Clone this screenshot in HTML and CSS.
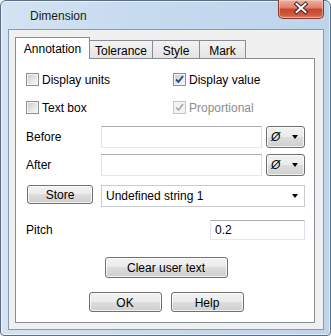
FILE: index.html
```html
<!DOCTYPE html>
<html lang="en">
  <head>
    <meta charset="UTF-8" />
    <title>Dimension</title>
    <link rel="stylesheet" href="styles.css">
  </head>
  <body>
    <div class="window">
      <div class="titlebar">
        <span class="title">Dimension</span>
        <div class="close">
          <svg width="46" height="19" viewBox="0 0 46 19">
            <path d="M18.5 5 L27.5 13 M27.5 5 L18.5 13" stroke="#3a2420" stroke-width="4" stroke-linecap="square" />
            <path d="M18.5 5 L27.5 13 M27.5 5 L18.5 13" stroke="#fff" stroke-width="2" stroke-linecap="square" />
          </svg>
        </div>
      </div>

      <div class="client">
        <div class="tabs">
          <div class="tab active">Annotation</div>
          <div class="tab tab-tol">Tolerance</div>
          <div class="tab tab-style">Style</div>
          <div class="tab tab-mark">Mark</div>
        </div>

        <div class="panel">
          <div class="checks">
            <label class="check"><span class="box"></span>Display units</label>
            <label class="check">
              <span class="box">
                <svg width="9" height="9" viewBox="0 0 9 9"><path d="M1 4.5 L3.5 7 L8 1" fill="none" stroke="#22448c" stroke-width="1.8" /></svg>
              </span>Display value
            </label>
            <label class="check"><span class="box"></span>Text box</label>
            <label class="check disabled">
              <span class="box">
                <svg width="9" height="9" viewBox="0 0 9 9"><path d="M1 4.5 L3.5 7 L8 1" fill="none" stroke="#a8a8a8" stroke-width="1.6" /></svg>
              </span>Proportional
            </label>
          </div>

          <div class="field row-before">
            <span class="label">Before</span>
            <div class="input"></div>
            <div class="btn pick"><span class="sym">Ø</span><span class="arrow"></span></div>
          </div>

          <div class="field row-after">
            <span class="label">After</span>
            <div class="input"></div>
            <div class="btn pick"><span class="sym">Ø</span><span class="arrow"></span></div>
          </div>

          <div class="field row-store">
            <div class="btn store">Store</div>
            <div class="input combo">Undefined string 1<span class="arrow"></span></div>
          </div>

          <div class="field row-pitch">
            <span class="label">Pitch</span>
            <div class="input pitch">0.2</div>
          </div>

          <div class="row-clear">
            <div class="btn clear">Clear user text</div>
          </div>

          <div class="row-actions">
            <div class="btn action">OK</div>
            <div class="btn action">Help</div>
          </div>
        </div>
      </div>
    </div>
  </body>
</html>
```

FILE: styles.css
```css
* {
  box-sizing: border-box;
}
body {
  margin: 0;
  font-family: "Liberation Sans", Arial, sans-serif;
  font-size: 12px;
  color: #000;
  background: #fff;
}
.window {
  width: 331px;
  height: 336px;
  border: 1px solid #5e6d80;
  border-radius: 6px 6px 4px 4px;
  background: linear-gradient(90deg, #d4e3f3 0%, #c7dbef 40%, #bdd4ec 100%);
  box-shadow: inset 0 0 0 1px rgba(255, 255, 255, 0.55);
}
.titlebar {
  height: 28px;
  display: flex;
  align-items: flex-start;
  justify-content: space-between;
}
.title {
  padding: 8px 0 0 29px;
  color: #1a1a1a;
}
.close {
  width: 46px;
  height: 19px;
  margin-right: 6px;
  margin-top: -1px;
  border: 1px solid #86382c;
  border-top: none;
  border-radius: 0 0 5px 5px;
  background: linear-gradient(#eab0a4 0%, #dc8068 45%, #c8442c 50%, #d05a42 85%, #e08a72 100%);
  box-shadow: inset 0 0 0 1px rgba(255, 220, 210, 0.5);
}
.close svg {
  display: block;
  margin: -1px 0 0 -1px;
}
.client {
  margin: 0 6px 0 7px;
  height: 301px;
  border: 1px solid #8d99a6;
  background: #f0f0f0;
  padding: 7px 8px 0 6px;
}
.tabs {
  display: flex;
  align-items: flex-end;
  height: 21px;
}
.tab {
  height: 18px;
  margin-left: -1px;
  border: 1px solid #898c95;
  border-bottom: none;
  background: linear-gradient(#f3f3f3, #e4e4e4);
  text-align: center;
  padding-top: 3px;
}
.tab.active {
  position: relative;
  z-index: 1;
  margin-left: 0;
  width: 75px;
  height: 22px;
  margin-bottom: -1px;
  background: #fff;
  padding-top: 4px;
}
.tab-tol {
  width: 64px;
}
.tab-style {
  width: 48px;
}
.tab-mark {
  width: 47px;
}
.panel {
  height: 265px;
  border: 1px solid #898c95;
  background: #fff;
  padding: 13px 8px 10px 10px;
  display: flex;
  flex-direction: column;
}
.checks {
  display: grid;
  grid-template-columns: 147px auto;
  row-gap: 13px;
}
.check {
  height: 15px;
  display: flex;
  align-items: center;
  gap: 3px;
}
.check.disabled {
  color: #8d8d8d;
}
.box {
  width: 13px;
  height: 13px;
  border: 1px solid #8e8f8f;
  padding: 1px;
  background: linear-gradient(135deg, #cfcfcf, #f7f7f7) content-box, #f4f4f4;
  display: flex;
  align-items: center;
  justify-content: center;
}
.check.disabled .box {
  border-color: #c5c5c5;
  background: #f4f4f4;
}
.field {
  display: grid;
  grid-template-columns: 75px 161px 43px;
  align-items: center;
  height: 22px;
}
.row-before {
  margin-top: 11px;
}
.row-after {
  margin-top: 6px;
}
.row-store {
  margin-top: 9px;
}
.row-pitch {
  margin-top: 13px;
  height: 20px;
}
.input {
  height: 22px;
  border: 1px solid;
  border-color: #abadb3 #dbdfe6 #e3e9ef #e2e3ea;
  background: #fff;
  padding: 3px 4px;
}
.btn {
  border: 1px solid #707070;
  border-radius: 3px;
  background: linear-gradient(#f2f2f2 0%, #ebebeb 50%, #dddddd 50%, #cfcfcf 100%);
  box-shadow: inset 0 0 0 1px rgba(255, 255, 255, 0.7);
  text-align: center;
}
.pick {
  margin-left: 4px;
  height: 22px;
  display: flex;
  align-items: center;
  justify-content: space-between;
  padding: 0 6px 0 4px;
}
.sym {
  font-style: italic;
}
.arrow {
  width: 0;
  height: 0;
  border-left: 3.5px solid transparent;
  border-right: 3.5px solid transparent;
  border-top: 4px solid #000;
}
.store {
  width: 66px;
  height: 19px;
  margin-left: 1px;
  align-self: start;
  padding-top: 2px;
}
.combo {
  grid-column: 2 / 4;
  border-color: #c8ccd2;
  display: flex;
  align-items: center;
  justify-content: space-between;
  padding: 0 6px 0 4px;
}
.pitch {
  grid-column: 2 / 4;
  justify-self: end;
  width: 95px;
  height: 20px;
  padding: 2px 4px;
}
.row-clear {
  margin-top: 17px;
  display: flex;
  justify-content: center;
}
.clear {
  width: 123px;
  height: 21px;
  padding-top: 3px;
}
.row-actions {
  margin-top: 14px;
  display: flex;
  justify-content: center;
  gap: 9px;
}
.action {
  width: 73px;
  height: 20px;
  padding-top: 3px;
}
```
